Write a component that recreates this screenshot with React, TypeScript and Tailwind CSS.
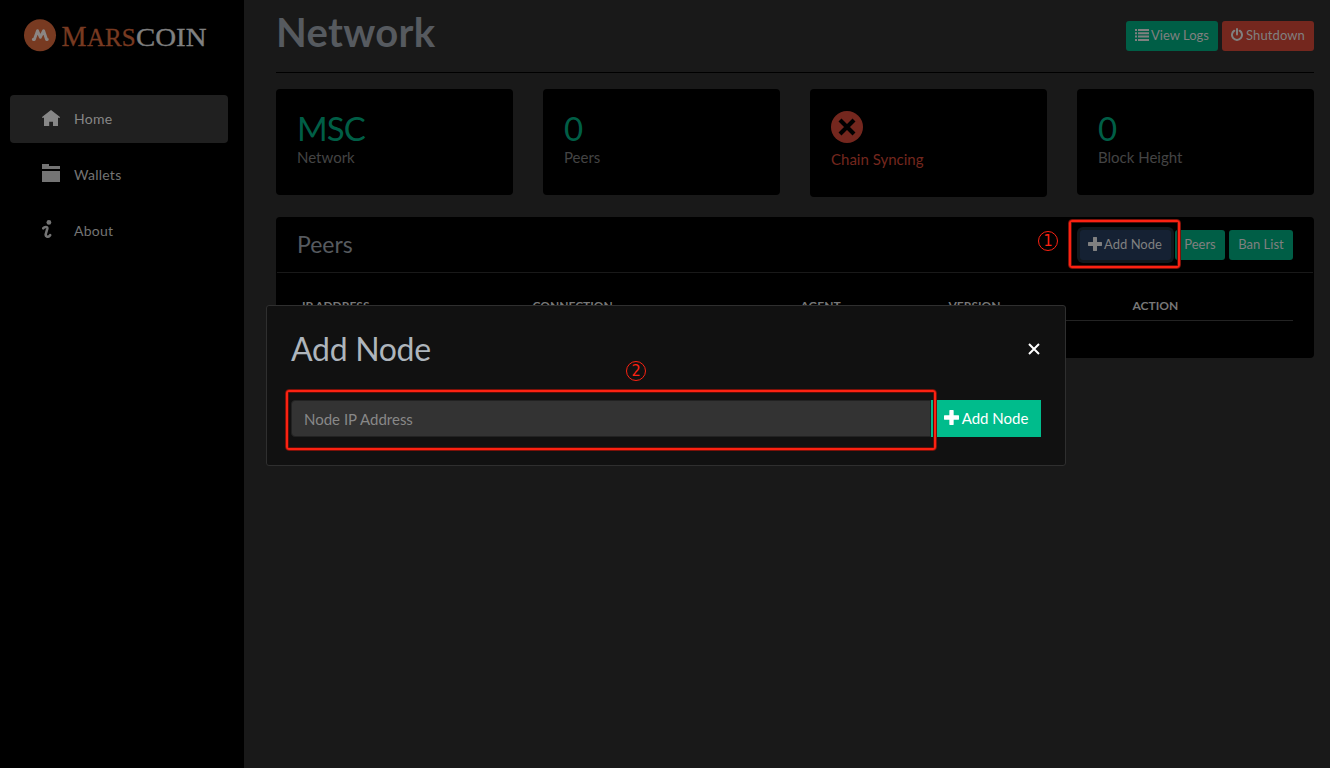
import React from "react";

function Logo() {
  return (
    <svg className="block h-10 w-[190px]" viewBox="0 0 190 40" aria-label="Marscoin">
      <circle cx="16" cy="20.300" r="16" fill="#783a21" />
      <path
        d="M9.300 24.500H10.300L13.500 15.700L16.300 22.300L19.600 15.700L22.600 24.500H23.300"
        fill="none"
        stroke="#8b8583"
        strokeWidth="2.900"
        strokeLinecap="round"
        strokeLinejoin="round"
      />
      <g className="font-['Liberation_Serif',serif]" strokeWidth="0.350">
        <g fill="#783a21" stroke="#783a21">
          <text x="37.500" y="30.600" fontSize="30" textLength="25" lengthAdjust="spacingAndGlyphs">M</text>
          <text x="63" y="30.600" fontSize="25.500" textLength="48.500" lengthAdjust="spacingAndGlyphs">ARS</text>
        </g>
        <g fill="#808080" stroke="#808080">
          <text x="112" y="30.600" fontSize="25.500" textLength="70.500" lengthAdjust="spacingAndGlyphs">COIN</text>
        </g>
      </g>
    </svg>
  );
}

function HomeIcon() {
  return (
    <svg className="h-[18px] w-[18px]" viewBox="0 0 18 18" fill="currentColor">
      <path d="M9 1 18 8v.7h-2V17h-5v-4.300H7.200V17H2V8.700H0V8L9 1z" />
    </svg>
  );
}

function WalletIcon() {
  return (
    <svg className="-mt-px h-[18px] w-[18px]" viewBox="0 0 18 18" fill="currentColor">
      <path d="M0 0h7v2h11v3H0zM0 7h18v11H0z" />
    </svg>
  );
}

function InfoIcon() {
  return (
    <svg className="-mt-px h-[18px] w-[18px]" viewBox="0 0 18 18">
      <circle cx="6.900" cy="2.400" r="2.400" fill="currentColor" />
      <path
        d="M1.200 8.300C2.500 6.600 5.800 6.300 5.300 8.800L3.800 14c-.7 3 2.700 3.600 4.300 1.200"
        fill="none"
        stroke="currentColor"
        strokeWidth="2.600"
        strokeLinecap="round"
      />
    </svg>
  );
}

function ListIcon() {
  return (
    <svg className="-mt-[3px] h-3 w-[14px]" viewBox="0 0 14 12" fill="currentColor">
      <path d="M0 0h2v2H0zM0 3.300h2v2H0zM0 6.600h2v2H0zM0 10h2v2H0zM3 0h11v2H3zM3 3.300h11v2H3zM3 6.600h11v2H3zM3 10h11v2H3z" />
    </svg>
  );
}

function PowerIcon() {
  return (
    <svg className="-mt-[3px] h-[13px] w-3" viewBox="0 0 12 13" fill="none" stroke="currentColor" strokeWidth="2" strokeLinecap="round">
      <path d="M6 1v5.500M3.300 2.700a5 5 0 1 0 5.400 0" />
    </svg>
  );
}

function PlusIcon({ className }: { className: string }) {
  return (
    <svg className={className} viewBox="0 0 16 16" fill="currentColor">
      <path d="M5.700.5Q5.700 0 6.200 0h3.600q.5 0 .5.500v5.200h5.200q.5 0 .5.500v3.600q0 .5-.5.500h-5.200v5.200q0 .5-.5.500H6.200q-.5 0-.5-.5v-5.200H.5Q0 10.300 0 9.800V6.200Q0 5.700.5 5.700h5.200z" />
    </svg>
  );
}

function ErrorIcon() {
  return (
    <svg className="block h-8 w-8" viewBox="0 0 32 32">
      <circle cx="16" cy="16" r="16" fill="#74271e" />
      <path d="M9 9l14 14M23 9L9 23" stroke="#000" strokeWidth="4.200" />
    </svg>
  );
}

function NavItem({ icon, label, active }: { icon: React.ReactNode; label: string; active?: boolean }) {
  return (
    <a
      className={
        active
          ? "flex h-12 items-center rounded bg-[#202020] pl-8 text-[#878787]"
          : "flex h-12 items-center rounded pl-8 text-[#747474]"
      }
    >
      <span className="-mt-[3px] w-8">{icon}</span>
      <span className="-mt-px text-[14px] tracking-[0.250px]">{label}</span>
    </a>
  );
}

function StatCard({ value, label }: { value: string; label: string }) {
  return (
    <div className="h-[106px] rounded bg-black pl-[21px] pt-[21px]">
      <div className="text-[33px] leading-[37px] tracking-[-0.900px] text-[#005e46]">{value}</div>
      <div className="text-[15px] leading-[20px] text-[#444]">{label}</div>
    </div>
  );
}

function SmallButton({ className, children }: { className: string; children: React.ReactNode }) {
  return (
    <button className={`flex h-[30px] items-center justify-center whitespace-nowrap rounded-[3px] text-[13px] text-[#808080] ${className}`}>
      {children}
    </button>
  );
}

function StepHighlight({ className }: { className: string }) {
  return (
    <div className={`absolute rounded-[4px] border border-[#7d1109] ${className}`}>
      <div className="h-full rounded-[3px] border-2 border-[#fb2212] shadow-[inset_0_0_0_1px_#5a0d07]" />
    </div>
  );
}

function StepNumber({ className, children }: { className: string; children: React.ReactNode }) {
  return (
    <span
      className={`absolute flex h-5 w-5 items-center justify-center rounded-full border border-[#fb2212] font-['DejaVu_Sans_Condensed','DejaVu_Sans',sans-serif] text-[16px] leading-none text-[#fb2212] ${className}`}
    >
      {children}
    </span>
  );
}

export default function App() {
  return (
    <div className="relative flex h-[768px] w-[1330px] overflow-hidden bg-[#191919] font-[Lato,sans-serif]">
      <aside className="w-[244px] shrink-0 bg-black">
        <div className="pl-6 pt-[15px]">
          <Logo />
        </div>
        <nav className="mt-10 flex flex-col gap-2 pl-[10px] pr-4">
          <NavItem icon={<HomeIcon />} label="Home" active />
          <NavItem icon={<WalletIcon />} label="Wallets" />
          <NavItem icon={<InfoIcon />} label="About" />
        </nav>
      </aside>

      <main className="flex-1 pl-8 pr-4">
        <header className="flex h-[73px] justify-between border-b border-black">
          <h1 className="pt-2 text-[40px] font-bold leading-[48px] tracking-[0.300px] text-[#565a5f]">Network</h1>
          <div className="flex gap-1 pt-[21px]">
            <SmallButton className="w-[92px] gap-0.5 bg-[#005e46]">
              <ListIcon />
              View Logs
            </SmallButton>
            <SmallButton className="w-[92px] gap-[3px] bg-[#74271e]">
              <PowerIcon />
              <span className="tracking-[0.100px]">Shutdown</span>
            </SmallButton>
          </div>
        </header>

        <section className="mt-4 grid grid-cols-4 items-start gap-[30px]">
          <StatCard value="MSC" label="Network" />
          <StatCard value="0" label="Peers" />
          <div className="h-[108px] rounded bg-black pl-[21px] pt-[22px]">
            <ErrorIcon />
            <div className="mt-[6px] text-[15px] leading-[20px] text-[#74271e]">Chain Syncing</div>
          </div>
          <StatCard value="0" label="Block Height" />
        </section>

        <section className="mt-5 h-[141px] rounded bg-black">
          <div className="mx-px flex h-14 justify-between border-b border-[#191919] pl-5 pr-5">
            <h2 className="pt-3 text-[23px] leading-[30px] text-[#565a5f]">Peers</h2>
            <div className="flex gap-1 pt-[13px]">
              <SmallButton className="w-[91px] gap-0.5 bg-[#152133] pr-px shadow-[0_0_0_3px_#10181d]">
                <PlusIcon className="-mt-[3px] h-[14px] w-[14px]" />
                Add Node
              </SmallButton>
              <SmallButton className="w-[50px] bg-[#005e46]">Peers</SmallButton>
              <SmallButton className="w-16 bg-[#005e46]">Ban List</SmallButton>
            </div>
          </div>
          <div className="mx-[21px] mt-[17px] grid h-[31px] grid-cols-[230.500px_268px_148px_184px_1fr] border-b border-[#232323] pl-[5px] pt-2 text-xs font-bold leading-4 text-[#777]">
            <span>IP ADDRESS</span>
            <span>CONNECTION</span>
            <span>AGENT</span>
            <span>VERSION</span>
            <span>ACTION</span>
          </div>
        </section>
      </main>

      <div className="absolute left-[266px] top-[305px] h-[161px] w-[800px] rounded-[3px] border border-[#2f2f2f] bg-[#111] px-6">
        <div className="flex h-[94px] items-start justify-between">
          <h3 className="pt-[23px] text-[32px] leading-[40px] tracking-[-0.300px] text-[#aeb5bc]">Add Node</h3>
          <svg className="mr-px mt-[37px] h-3 w-3" viewBox="0 0 12 12" stroke="#fff" strokeWidth="2">
            <path d="M1 1l10 10M11 1L1 11" />
          </svg>
        </div>
        <div className="flex h-[37px]">
          <div className="flex flex-1 items-center rounded-l border border-[#222] bg-[#333] pl-3 pt-0.5 text-[15px] text-[#888]">
            Node IP Address
          </div>
          <button className="flex w-[110px] items-center justify-center gap-[3px] bg-[#00bc8c] text-[15px] text-white">
            <PlusIcon className="-mt-0.5 h-[15px] w-[15px]" />
            Add Node
          </button>
        </div>
      </div>

      <StepHighlight className="left-[1068px] top-[219px] h-[50px] w-[113px]" />
      <StepHighlight className="left-[285px] top-[389px] h-[62px] w-[652px]" />
      <StepNumber className="left-[1038px] top-[231px]">1</StepNumber>
      <StepNumber className="left-[626px] top-[361px]">2</StepNumber>
    </div>
  );
}
